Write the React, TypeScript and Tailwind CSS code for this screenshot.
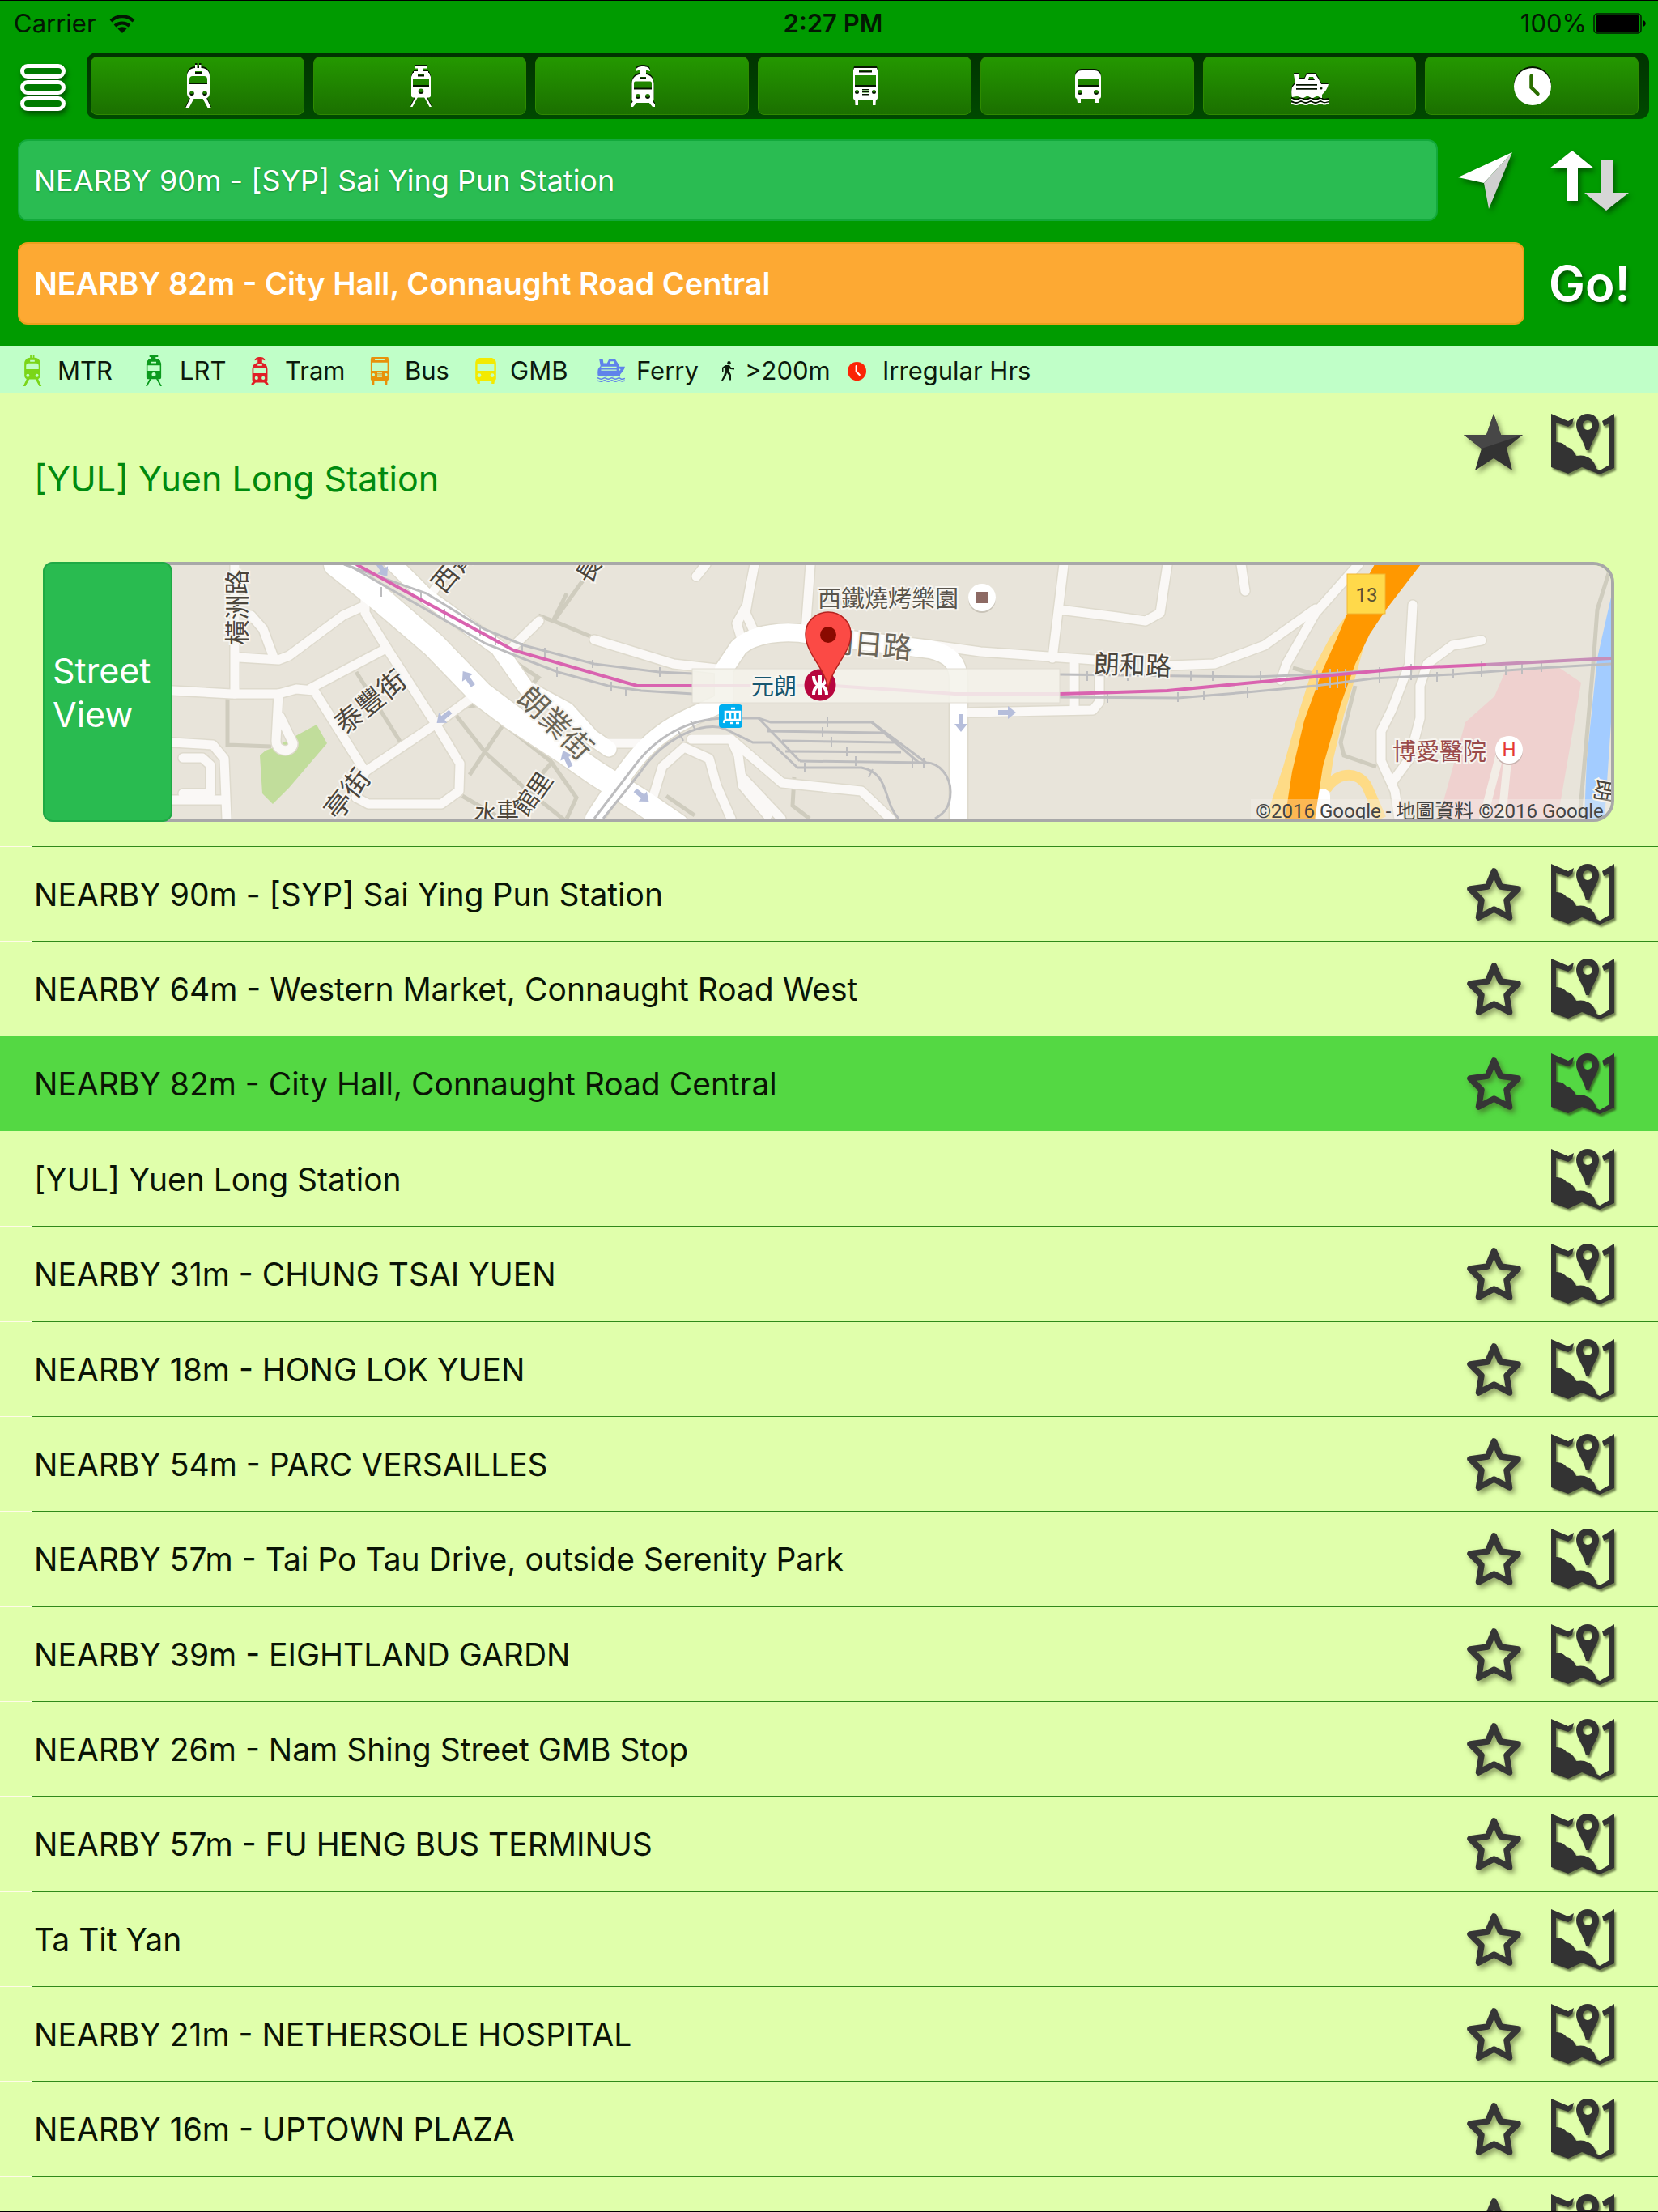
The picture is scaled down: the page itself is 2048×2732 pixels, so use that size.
import type { ReactNode } from 'react';

interface Stop {
  name: string;
  starred?: boolean;
  selected?: boolean;
}

const stops: Stop[] = [
  { name: 'NEARBY 90m - [SYP] Sai Ying Pun Station', starred: true },
  { name: 'NEARBY 64m - Western Market, Connaught Road West', starred: true },
  { name: 'NEARBY 82m - City Hall, Connaught Road Central', starred: true, selected: true },
  { name: '[YUL] Yuen Long Station' },
  { name: 'NEARBY 31m - CHUNG TSAI YUEN', starred: true },
  { name: 'NEARBY 18m - HONG LOK YUEN', starred: true },
  { name: 'NEARBY 54m - PARC VERSAILLES', starred: true },
  { name: 'NEARBY 57m - Tai Po Tau Drive, outside Serenity Park', starred: true },
  { name: 'NEARBY 39m - EIGHTLAND GARDN', starred: true },
  { name: 'NEARBY 26m - Nam Shing Street GMB Stop', starred: true },
  { name: 'NEARBY 57m - FU HENG BUS TERMINUS', starred: true },
  { name: 'Ta Tit Yan', starred: true },
  { name: 'NEARBY 21m - NETHERSOLE HOSPITAL', starred: true },
  { name: 'NEARBY 16m - UPTOWN PLAZA', starred: true },
  { name: '', starred: true },
];

/* ---------- transport icons ---------- */

interface IconProps {
  className?: string;
}

function MtrIcon({ className }: IconProps) {
  return (
    <svg viewBox="0 0 32 54" className={className} fill="currentColor" aria-hidden="true">
      <path d="M12 0h2.500v5H12zM17 0h2.500v5H17z" />
      <path
        fillRule="evenodd"
        d="M12 4h8c5 0 10 4 10 10v21c0 4-3 7-7 7H9c-4 0-7-3-7-7V14C2 8 7 4 12 4zm0 4v3h8V8zM9 14c-2.500 0-4 1.500-4 4v6h22v-6c0-2.500-1.500-4-4-4zM8 32.500a2.800 2.800 0 1 0 0 5.600 2.800 2.800 0 0 0 0-5.600zm16 0a2.800 2.800 0 1 0 0 5.600 2.800 2.800 0 0 0 0-5.600z"
      />
      <path d="M6 41h5L4 54H0zM21 41h5l6 13h-4z" />
    </svg>
  );
}

function LrtIcon({ className }: IconProps) {
  return (
    <svg viewBox="0 0 26 50" className={className} fill="currentColor" aria-hidden="true">
      <path d="M6 0h14v2.500h-4V6h6v4H4V6h5V2.500H6z" />
      <path
        fillRule="evenodd"
        d="M3 8h20l2 5v23c0 1.500-1 2.500-2.500 2.500h-19C2 38.500 1 37.500 1 36V13zm6 2v2.500h8V10zm-6 6v9h20v-9zm10 11.500a3.300 3.300 0 1 0 0 6.600 3.300 3.300 0 0 0 0-6.600z"
      />
      <path d="M6 38h3L2.500 50H0zM17 38h3l6 12h-2.500z" />
    </svg>
  );
}

function TramIcon({ className }: IconProps) {
  return (
    <svg viewBox="0 0 30 50" className={className} fill="currentColor" aria-hidden="true">
      <path d="M6 6c0-4 4-6 9-6s9 2 9 6l-5-1.500V10h-8V4.500z" />
      <path
        fillRule="evenodd"
        d="M15 9.500c8 0 13.500 4 13.500 12V40c0 3-2 5-5 5h-17c-3 0-5-2-5-5V21.500c0-8 5.500-12 13.500-12zM11 13v2.500h8V13zM6 18.500c-1.500 0-2 1-2 2.500v7.500h22V21c0-1.500-.5-2.500-2-2.500zM9 34a3 3 0 1 0 0 6 3 3 0 0 0 0-6zm12 0a3 3 0 1 0 0 6 3 3 0 0 0 0-6z"
      />
      <path d="M3 43l5 1-5 6H0v-3zM27 43l-5 1 5 6h3v-3z" />
    </svg>
  );
}

function BusIcon({ className }: IconProps) {
  return (
    <svg viewBox="0 0 30 46" className={className} fill="currentColor" aria-hidden="true">
      <path
        fillRule="evenodd"
        d="M1 0h28l1 3v34c0 1.500-1 2.500-2.500 2.500h-25C1 39.500 0 38.500 0 37V3zm6 3v2.500h16V3zM2 9v14h26V9zm2.500 18a2.500 2.500 0 1 0 0 5 2.500 2.500 0 0 0 0-5zm21 0a2.500 2.500 0 1 0 0 5 2.500 2.500 0 0 0 0-5zM11 26v1.500h8V26zm0 3v1.500h8V29zm0 3v1.500h8V32z"
      />
      <path d="M2 38h4v8H2.500zM24 38h4l-.5 8H24z" />
    </svg>
  );
}

function MinibusIcon({ className }: IconProps) {
  return (
    <svg viewBox="0 0 32 40" className={className} fill="currentColor" aria-hidden="true">
      <path
        fillRule="evenodd"
        d="M8 0h16c4 0 8 3 8 8v24c0 2-1 3-3 3H3c-2 0-3-1-3-3V8c0-5 4-8 8-8zM3 10v10h26V10zm3 14a3 3 0 1 0 0 6 3 3 0 0 0 0-6zm20 0a3 3 0 1 0 0 6 3 3 0 0 0 0-6z"
      />
      <path d="M2 34h5v6H3zM25 34h5l-1 6h-4z" />
    </svg>
  );
}

function FerryIcon({ className }: IconProps) {
  return (
    <svg viewBox="0 0 46 38" className={className} fill="currentColor" aria-hidden="true">
      <path
        fillRule="evenodd"
        d="M3 0h6l1 6h6l3-6h11l4 6 3 6h9c-1 5-4 9-8 13v4c-3 0-3-2-6-2s-3 2-6 2-3-2-6-2-3 2-6 2-4-2-7-2-4 1-6 1c-1-4-1-8 0-12l4-5zm19 3l-1 4h8l-2-4zM6 12v1.800h26V12zm0 5v1.800h26V17zm31-1.500a1.500 1.500 0 1 0 0 3 1.500 1.500 0 0 0 0-3z"
      />
      <path
        d="M0 31c2 0 3 2 6 2s4-2 6-2 3 2 6 2 4-2 6-2 3 2 6 2 4-2 6-2 3 2 5 2 3-1 5-1M0 35.500c2 0 3 1.500 6 1.500s4-2 6-2 3 2 6 2 4-2 6-2 3 2 6 2 4-2 6-2 3 1.500 5 1.500 3-1 5-1"
        fill="none"
        stroke="currentColor"
        strokeWidth="2"
      />
    </svg>
  );
}

function ClockIcon({ className, hands = '#2a6e00' }: IconProps & { hands?: string }) {
  return (
    <svg viewBox="0 0 46 46" className={className} aria-hidden="true">
      <circle cx="23" cy="23" r="23" fill="currentColor" />
      <path d="M21.500 10v14l8 8" fill="none" stroke={hands} strokeWidth="4.500" strokeLinecap="round" />
    </svg>
  );
}

function WalkIcon({ className }: IconProps) {
  return (
    <svg viewBox="0 0 16 24" className={className} fill="currentColor" aria-hidden="true">
      <circle cx="9.500" cy="2.200" r="2.200" />
      <path d="M5 5h5l2 3 4 1v1.500l-5-.5-1-1v4l2 4v6.500H9.500V18L7 14.500 5.500 19 2 24H0l3-6 1.500-5V8L2.500 9v4H1V8z" />
    </svg>
  );
}

/* ---------- action icons ---------- */

function MapPinIcon() {
  return (
    <svg viewBox="0 0 78 75" className="h-[75px] w-[78px] drop-shadow-[2px_3px_1px_rgba(40,50,20,0.6)]" fill="#333333" aria-hidden="true">
      <path d="M0 0l21 9 7-4-2 8-5 3-15-5v24c6 0 10 2 13 6 6 1 9 5 12 11 5-1 10-1 15 2 6 3 8 8 10 14l4 2 12-7V12l-7 3-2-6L78 0v67l-18 8-22-9-17 8-21-8z" />
      <path
        fillRule="evenodd"
        d="M45 0c8 0 14 6 14 14 0 9-8 18-12 31h-4C40 32 31 23 31 14 31 6 37 0 45 0zm0 8a6 6 0 1 0 0 12 6 6 0 0 0 0-12z"
      />
    </svg>
  );
}

function StarOutlineIcon() {
  return (
    <svg viewBox="0 0 67 65" className="h-[65px] w-[67px] drop-shadow-[3px_4px_3px_rgba(60,70,30,0.55)]" aria-hidden="true">
      <path
        d="M33.500 4l8 19L63 26 49 40l3.500 21-19-10-19 10L18 40 4 26l21.500-3z"
        fill="none"
        stroke="#363636"
        strokeWidth="7.500"
        strokeLinejoin="round"
      />
    </svg>
  );
}

function StarFilledIcon() {
  return (
    <svg viewBox="0 0 73 70" className="h-[70px] w-[73px] drop-shadow-[3px_4px_3px_rgba(60,70,30,0.55)]" aria-hidden="true">
      <path d="M37 0l9 26h27L53 42l7 28-23-15-23 15 8-27L0 26h28z" fill="#333333" />
      <path d="M37 0l9 26h27L22 43 0 26h28z" fill="#474747" />
    </svg>
  );
}

function LocateIcon() {
  return (
    <svg viewBox="0 0 68 70" className="h-[70px] w-[68px] drop-shadow-[3px_4px_3px_rgba(0,50,0,0.6)]" aria-hidden="true">
      <path d="M67 0L0 31l32 7z" fill="#ffffff" />
      <path d="M67 0L32 38l6 32z" fill="#cfcfcf" />
    </svg>
  );
}

function SwapIcon() {
  return (
    <svg viewBox="0 0 98 74" className="h-[74px] w-[98px] drop-shadow-[3px_4px_3px_rgba(0,50,0,0.6)]" aria-hidden="true">
      <path d="M28 0l27 22H35v40H21V22H0z" fill="#ffffff" />
      <path d="M64 12h14v40h20L70 74 43 52h21z" fill="#d6d6d6" />
    </svg>
  );
}

function MenuIcon() {
  return (
    <svg viewBox="0 0 56 58" className="h-[58px] w-14 drop-shadow-[2px_4px_3px_rgba(0,50,0,0.7)]" aria-hidden="true">
      <g fill="#007a00" stroke="#ffffff" strokeWidth="5">
        <rect x="2.500" y="2.500" width="51" height="13" rx="6.500" />
        <rect x="2.500" y="22.500" width="51" height="13" rx="6.500" />
        <rect x="2.500" y="42.500" width="51" height="13" rx="6.500" />
      </g>
    </svg>
  );
}

/* ---------- station map ---------- */

const localRoads = [
  'M290 697V857',
  'M295 812L344 815 357 810 424 760 446 750',
  'M451 737V757L482 807 540 897 568 943 567 977 545 993H455L440 985',
  'M384 850L473 803',
  'M213 853L286 857H344L366 851 388 853 451 953',
  'M589 857L540 893 451 953 440 985',
  'M344 857L341 915C341 930 362 930 362 918L346 885',
  'M213 917L263 920 277 937 280 1011',
  'M213 988H277',
  'M226 936H250L260 945V980H226',
  'M310 760L325 777 338 812',
  'M666 767L627 805',
  'M558 697L532 735',
  'M872 697L860 712',
  'M932 697L925 733 921 757 930 777 943 787',
  'M921 750L910 770 917 793',
  'M1001 697L995 780',
  'M734 790L832 820 894 827',
  'M751 918H795',
  'M1153 797L1211 805 1380 817',
  'M1446 822L1500 820 1562 797 1625 752',
  'M1678 697L1625 757 1589 820 1582 840',
  'M1314 697L1300 813',
  'M1309 753L1380 762 1415 767 1433 757 1442 697',
  'M1533 697L1538 730',
  'M1198 880L1350 877 1358 867V830',
  'M1327 877V820',
  'M805 990L818 947 845 923 876 937 885 970 903 1011',
  'M854 913H903L912 933 917 970 948 1007',
  'M903 913L966 967 1064 977 1100 1011',
  'M917 960L965 1011',
  'M1745 747L1741 820 1719 877 1706 903V940L1723 977 1728 1011',
  'M1830 791L1794 797 1763 820 1754 847V887L1741 937 1719 967',
];

const footpaths = [
  'M281 863V920L335 922',
  'M440 830L495 917',
  'M700 733L683 767 665 760',
  'M629 813L665 837 652 850',
  'M563 883L600 930 650 975 700 1015',
  'M575 873L594 870 625 897 680 940 712 985 700 1011',
  'M625 890L598 930 580 957',
  'M571 983L612 1007',
  'M683 940L634 997',
  'M725 710L684 767 734 788',
  'M981 960L979 995 1000 1011',
  'M823 983L858 1007',
  'M1674 847L1656 917 1660 933 1700 947',
  'M1597 825L1625 833',
  'M1988 705L1973 753 1968 820 1951 1011',
];

const rails = [
  'M425 697L527 733 598 777 647 797 734 820 814 830 856 832',
  'M434 700L600 795 650 815 689 830 751 847 792 853 856 857',
  'M1309 833L1549 836 1625 833 1741 825',
  'M1309 861L1455 862 1540 855 1625 847 1696 838 1794 833 1902 825 1991 820',
  'M734 1011L783 947C810 910 850 888 894 887H937L952 892H1077L1144 942C1160 942 1174 958 1174 978S1165 1005 1155 1011',
  'M745 1011L790 955C820 910 870 890 895 900L930 917H952L985 948H1064C1100 955 1090 990 1110 1011',
  'M948 903L1091 905',
  'M966 915L1109 917',
  'M970 928L1113 929',
  'M988 940L1144 942',
  'M937 887L988 940',
  'M1077 892L1135 942',
];

const railTicks =
  'M471 725v12M520 730v14M549 752v16M593 772v14M612 783v14M645 794v14M673 800v14M688 824v12M732 815v10M755 842v12M815 824v12M773 848v12M1022 886v12M1016 898v12M1027 910v12M1046 922v12M1057 934v12M994 942v12M1127 936v12M1141 936v12M1078 950l-5 10M853 890l6 12M838 903l6 12M1393 829v12M1471 829v12M1498 829v12M1557 829v12M1343 829v12M1368 856v12M1455 855v12M1487 853v12M1541 848v14M1627 828v24M1643 826v24M1652 826v24M1662 826v24M1704 824v20M1743 820v20M1775 830v12M1795 826v12M1830 816v20M1860 822v12M1880 820v12M1904 818v12';

const stationLoop =
  'M894 827L912 800C930 782 970 778 1001 784L1149 802C1175 808 1184 820 1184 840V1011M894 827V867L850 887C800 910 780 940 734 1011';
const mainStreet = 'M415 697L473 743 536 797 594 857 634 887 700 930 736 955 792 990 836 1020';
const sideStreet = 'M480 690L527 737 615 800 650 850 700 877 730 910 752 925';

const arrows: [number, number, number][] = [
  [578, 838, -125],
  [548, 886, 140],
  [472, 703, 55],
  [700, 937, -115],
  [793, 983, 40],
  [1187, 893, 90],
  [1244, 880, 0],
];

interface MapLabel {
  text: string;
  x: number;
  y: number;
  size: number;
  angle?: number;
  color?: string;
}

const labels: MapLabel[] = [
  { text: '橫洲路', x: 290, y: 750, size: 31, angle: -90 },
  { text: '泰豐街', x: 456, y: 865, size: 34, angle: -39 },
  { text: '亭街', x: 427, y: 979, size: 34, angle: -52 },
  { text: '西菁', x: 558, y: 701, size: 32, angle: -50 },
  { text: '水', x: 600, y: 1002, size: 28, angle: 5 },
  { text: '車', x: 627, y: 1000, size: 28 },
  { text: '館', x: 648, y: 990, size: 30, angle: -55 },
  { text: '里', x: 665, y: 968, size: 30, angle: -55 },
  { text: '朗業街', x: 688, y: 891, size: 37, angle: 44, color: '#6a6455' },
  { text: '長', x: 725, y: 703, size: 30, angle: -60 },
  { text: '西鐵燒烤樂園', x: 1097, y: 737, size: 29, color: '#5a554d' },
  { text: '朗日路', x: 1073, y: 793, size: 36, angle: 5, color: '#6b665a' },
  { text: '元朗', x: 956, y: 846, size: 28, color: '#17566f' },
  { text: '朗和路', x: 1399, y: 819, size: 32, angle: 2 },
  { text: '博愛醫院', x: 1778, y: 926, size: 29, color: '#9a4b4b' },
  { text: '朗', x: 1984, y: 977, size: 28, angle: 100 },
];

function StationMap() {
  return (
    <svg
      viewBox="57 698 1933 313"
      preserveAspectRatio="xMidYMid slice"
      className="block h-full w-full"
      role="img"
      aria-label="Map of Yuen Long Station"
    >
      <rect x="0" y="600" width="2100" height="500" fill="#e8e4da" />
      <path d="M328 927L339 923 391 895 404 918 357 973 337 993 324 980 321 933z" fill="#c1dd9b" />
      <path d="M1859 830L1922 822 1953 843 1924 1011H1777L1810 892 1846 860z" fill="#efd1cf" />
      <path d="M1991 733L1973 813 1960 937 1957 1011H1982L1991 877z" fill="#a3ccff" />

      <g fill="none" stroke="#cfccbe" strokeWidth="5">
        {footpaths.map((d) => (
          <path key={d} d={d} />
        ))}
      </g>

      <g fill="none" strokeLinecap="round" strokeLinejoin="round">
        <g stroke="#dedacd">
          <g strokeWidth="14">
            {localRoads.map((d) => (
              <path key={d} d={d} />
            ))}
          </g>
          <path d={stationLoop} strokeWidth="25" />
          <path d={mainStreet} strokeWidth="33" />
          <path d={sideStreet} strokeWidth="22" />
        </g>
        <g stroke="#faf8f6" strokeWidth="11">
          {localRoads.map((d) => (
            <path key={d} d={d} />
          ))}
        </g>
        <g stroke="#ffffff">
          <path d={stationLoop} strokeWidth="22" />
          <path d={mainStreet} strokeWidth="30" />
          <path d={sideStreet} strokeWidth="19" />
        </g>
        <path d="M1857 915L1832 1011M1862 940L1855 1011" stroke="#f2ede6" strokeWidth="10" />
      </g>

      {/* route 13 */}
      <path d="M1663 760L1643 787 1620 830 1602 887 1585 947 1563 1012H1640V983L1647 937 1660 883 1676 830 1685 797z" fill="#fedb86" />
      <path d="M1638 975C1650 955 1675 950 1688 970L1706 1011" fill="none" stroke="#fedb86" strokeWidth="13" />
      <path d="M1634 983V1011" stroke="#ffffff" strokeWidth="18" strokeLinecap="round" />
      <path
        d="M1698 697L1663 760 1652 787 1634 827 1611 890 1596 953 1587 1012H1624L1634 947 1656 870 1674 820 1692 783 1712 753 1755 697z"
        fill="#ff9800"
      />

      <g fill="none" stroke="#bdbdbf" strokeWidth="3">
        {rails.map((d) => (
          <path key={d} d={d} />
        ))}
        <path d={railTicks} strokeWidth="2" />
      </g>
      <path
        d="M440 697L634 803 787 847H1030L1180 857H1309L1348 856 1442 853 1634 835 1741 825 1835 821"
        fill="none"
        stroke="#d963b0"
        strokeWidth="4"
      />
      <path d="M1835 821L1991 813" fill="none" stroke="#c78fb8" strokeWidth="4" />
      <rect x="855" y="826" width="454" height="42" fill="#f4f2ea" fillOpacity="0.88" stroke="#e0dcd2" strokeWidth="1" />

      {arrows.map(([x, y, angle]) => (
        <path
          key={`${x}-${y}`}
          d="M-11-3H1v-5L11 0 1 8V3h-12z"
          transform={`translate(${x} ${y}) rotate(${angle})`}
          fill="#b6bedb"
        />
      ))}

      {labels.map(({ text, x, y, size, angle = 0, color = '#4b453b' }) => (
        <text
          key={`${text}-${x}`}
          transform={`translate(${x} ${y}) rotate(${angle})`}
          fontSize={size}
          fill={color}
          stroke="#f7f5f0"
          strokeWidth="4"
          paintOrder="stroke"
          textAnchor="middle"
          dominantBaseline="central"
          className="font-['Noto_Sans_CJK_TC',sans-serif]"
        >
          {text}
        </text>
      ))}

      <circle cx="1213" cy="740" r="17" fill="#c9c4b9" />
      <circle cx="1213" cy="738" r="17" fill="#ffffff" />
      <rect x="1206" y="731" width="14" height="14" fill="#8d6a64" />

      <circle cx="1864" cy="928" r="17" fill="#c9b4b0" />
      <circle cx="1864" cy="926" r="17" fill="#ffffff" />
      <text x="1864" y="934" fontSize="24" fill="#e53935" textAnchor="middle" className="font-['Roboto',sans-serif]">
        H
      </text>

      <rect x="1664" y="709" width="47" height="49" fill="#ffd94a" stroke="#f2b632" strokeWidth="1" />
      <text x="1688" y="743" fontSize="24" fill="#5c5334" textAnchor="middle" className="font-['Roboto',sans-serif]">
        13
      </text>

      {/* light rail stop */}
      <rect x="888" y="870" width="29" height="29" rx="4" fill="#00aeef" />
      <path d="M896 879h18v10h-18zM902 879v10M908 879v10M903 875h5M902 893h4M909 893h4M895 889l-1 4" fill="none" stroke="#ffffff" strokeWidth="2.500" />

      {/* station roundel */}
      <circle cx="1013" cy="846" r="19.500" fill="#b7053f" />
      <path d="M1013 834v24M1005 835c0 15 16 15 16 0M1005 858c0-15 16-15 16 0" fill="none" stroke="#ffffff" strokeWidth="4" />

      <path
        d="M1023 852C1020 825 995 808 995 783a28 27 0 0 1 56 0C1051 808 1026 825 1023 852z"
        fill="#fb4a45"
        stroke="#b5231f"
        strokeWidth="1.500"
      />
      <circle cx="1023" cy="784" r="10" fill="#8a0a00" />

      <rect x="1545" y="987" width="450" height="30" fill="#f5f3ee" fillOpacity="0.35" />
      <text x="1766" y="1010" fontSize="24" fill="#444444" textAnchor="middle" className="font-['Roboto','Noto_Sans_CJK_TC',sans-serif]">
        ©2016 Google - 地圖資料 ©2016 Google
      </text>
    </svg>
  );
}

/* ---------- page parts ---------- */

const tabs: { label: string; icon: ReactNode }[] = [
  { label: 'MTR', icon: <MtrIcon className="h-[54px] w-8" /> },
  { label: 'Light rail', icon: <LrtIcon className="h-[50px] w-[26px]" /> },
  { label: 'Tram', icon: <TramIcon className="h-[50px] w-[30px]" /> },
  { label: 'Bus', icon: <BusIcon className="h-[46px] w-[30px]" /> },
  { label: 'Minibus', icon: <MinibusIcon className="h-10 w-8" /> },
  { label: 'Ferry', icon: <FerryIcon className="mt-2 h-[38px] w-[46px]" /> },
  { label: 'Recent', icon: <ClockIcon className="size-[46px]" /> },
];

function StatusBar() {
  return (
    <div className="grid h-[65px] grid-cols-[1fr_auto_1fr] items-center border-t border-black pb-2 pl-[17px] pr-[15px] text-[31px] text-[#031803]">
      <div className="flex items-center gap-4">
        <span>Carrier</span>
        <svg viewBox="0 0 32 24" className="h-6 w-8" aria-hidden="true">
          <path d="M2 9a20 20 0 0 1 28 0M7 15a13 13 0 0 1 18 0" fill="none" stroke="currentColor" strokeWidth="4" />
          <path d="M10.500 18.500a8 8 0 0 1 11 0L16 24z" fill="currentColor" />
        </svg>
      </div>
      <time className="pl-2 font-semibold">2:27 PM</time>
      <div className="flex items-center justify-end gap-2">
        <span>100%</span>
        <svg viewBox="0 0 65 26" className="h-[26px] w-[65px]" aria-hidden="true">
          <rect x="1" y="1" width="58" height="24" rx="4" fill="none" stroke="currentColor" strokeWidth="1.500" />
          <rect x="3" y="3" width="54" height="20" rx="2" fill="#000000" />
          <path d="M61 9c5 1 5 7 0 8z" fill="#000000" />
        </svg>
      </div>
    </div>
  );
}

function ModeTabs() {
  return (
    <nav className="flex h-[82px] items-stretch gap-[26px] pl-[25px] pr-[11px]">
      <button type="button" aria-label="Menu" className="flex items-center pt-1">
        <MenuIcon />
      </button>
      <div className="flex flex-1 gap-[11px] rounded-xl bg-linear-to-b from-[#003300] to-[#004a00] py-[5px] pl-[5px] pr-[13px]">
        {tabs.map(({ label, icon }) => (
          <button
            key={label}
            type="button"
            aria-label={label}
            className="flex flex-1 items-center justify-center rounded-lg border border-[#2f8a00] bg-linear-to-b from-[#249800] to-[#1b7000] pl-0.5 pt-0.5 text-white [&>svg]:drop-shadow-[0_-2px_0_rgba(0,0,0,0.85)]"
          >
            {icon}
          </button>
        ))}
      </div>
    </nav>
  );
}

function SearchForm() {
  return (
    <form className="flex flex-col gap-[26px] pb-[26px] pt-[25px]">
      <div className="flex items-center pl-[22px] pr-9">
        <input
          aria-label="From"
          defaultValue="NEARBY 90m - [SYP] Sai Ying Pun Station"
          className="h-[101px] min-w-0 flex-1 rounded-xl border-2 border-[#13a93c] bg-[#2abc52] px-[18px] text-[36px] text-white text-shadow-[0_1px_2px_rgba(0,80,0,0.4)]"
        />
        <button type="button" aria-label="Use current location" className="ml-[25px]">
          <LocateIcon />
        </button>
        <button type="button" aria-label="Swap" className="ml-[45px]">
          <SwapIcon />
        </button>
      </div>
      <div className="flex items-center gap-[30px] pl-[22px] pr-9">
        <input
          aria-label="To"
          defaultValue="NEARBY 82m - City Hall, Connaught Road Central"
          className="h-[102px] min-w-0 flex-1 rounded-xl border-2 border-[#ec9f1c] bg-[#fda933] px-[18px] text-[38px] font-semibold text-white"
        />
        <button type="submit" className="w-[99px] whitespace-nowrap text-[60px] font-semibold text-white text-shadow-[3px_4px_4px_rgba(0,50,0,0.6)]">
          Go!
        </button>
      </div>
    </form>
  );
}

const legend: { text: string; icon: ReactNode; box: string }[] = [
  { text: 'MTR', box: 'w-[43px]', icon: <MtrIcon className="h-[38px] w-6 text-[#7bd618]" /> },
  { text: 'LRT', box: 'w-[43px]', icon: <LrtIcon className="h-[38px] w-[22px] text-[#0c9a1e]" /> },
  { text: 'Tram', box: 'w-[43px]', icon: <TramIcon className="h-[35px] w-6 text-[#e01f26]" /> },
  { text: 'Bus', box: 'w-[43px]', icon: <BusIcon className="h-[34px] w-6 text-[#e8920a]" /> },
  { text: 'GMB', box: 'w-[43px]', icon: <MinibusIcon className="h-[32px] w-[26px] text-[#f3ea00]" /> },
  { text: 'Ferry', box: 'w-[48px]', icon: <FerryIcon className="h-[28px] w-[34px] text-[#5f83ea]" /> },
  { text: '>200m', box: 'w-[29px]', icon: <WalkIcon className="h-6 w-4" /> },
  { text: 'Irregular Hrs', box: 'w-[43px]', icon: <ClockIcon hands="#ffffff" className="size-[23px] text-[#fb2405]" /> },
];

function Legend() {
  return (
    <ul className="grid h-[59px] shrink-0 grid-cols-[151px_130px_148px_130px_151px_153px_156px_auto] items-center justify-start bg-[#c0ffc8] pl-7 pt-[3px] text-[31px] text-[#0c1a0c]">
      {legend.map(({ text, icon, box }) => (
        <li key={text} className="flex items-center">
          <span className={`flex shrink-0 ${box}`}>{icon}</span>
          <span className="whitespace-nowrap">{text}</span>
        </li>
      ))}
    </ul>
  );
}

function StationCard() {
  return (
    <section className="flex h-[559px] shrink-0 flex-col pl-[42px] pr-[54px]">
      <div className="flex h-[208px] justify-between">
        <h1 className="pt-[78px] text-[43px] leading-[54px] text-[#008a0e]">[YUL] Yuen Long Station</h1>
        <div className="flex gap-[35px] pt-[25px]">
          <button type="button" aria-label="Remove from favourites" className="self-start">
            <StarFilledIcon />
          </button>
          <button type="button" aria-label="Show on map" className="self-start">
            <MapPinIcon />
          </button>
        </div>
      </div>
      <div className="relative ml-[11px] h-[321px]">
        <div className="h-full overflow-hidden rounded-r-[26px] rounded-l-xl border-4 border-[#a8a8a8]">
          <StationMap />
        </div>
        <button
          type="button"
          className="absolute left-0 top-0 h-full w-40 rounded-xl border-2 border-[#1faa44] bg-[#29bb50] pl-2.5 text-left text-[43px] leading-[54px] text-white"
        >
          Street
          <br />
          View
        </button>
      </div>
    </section>
  );
}

function StopRow({ name, starred, selected }: Stop) {
  return (
    <li
      className={
        selected
          ? 'group flex h-[118px] border-[#54d843] bg-[#54d843]'
          : 'group flex h-[117px] nth-[3n]:h-[118px]'
      }
    >
      <span
        className={
          selected
            ? 'w-10'
            : 'w-10 border-t border-[#fffbe8] group-nth-[3n]:border-t-2 group-nth-[4]:border-transparent'
        }
      />
      <div
        className={
          selected
            ? 'flex flex-1 items-center pl-0.5 pr-[54px]'
            : 'flex flex-1 items-center border-t border-[#2f8a1a] pl-0.5 pr-[54px] group-nth-[3n]:border-t-2 group-nth-[4]:border-transparent'
        }
      >
        <span className="flex-1 pt-[3px] text-[39px] text-[#0a1405]">{name}</span>
        {starred && (
          <button type="button" aria-label="Add to favourites" className="mr-[37px]">
            <StarOutlineIcon />
          </button>
        )}
        <button type="button" aria-label="Show on map">
          <MapPinIcon />
        </button>
      </div>
    </li>
  );
}

export default function App() {
  return (
    <div className="flex h-screen flex-col overflow-hidden border-b border-black bg-[#e0ffab] font-['Inter','Noto_Sans_CJK_TC',sans-serif]">
      <header className="shrink-0 bg-[#009b00]">
        <StatusBar />
        <ModeTabs />
        <SearchForm />
      </header>
      <Legend />
      <StationCard />
      <ul>
        {stops.map((stop, i) => (
          <StopRow key={i} {...stop} />
        ))}
      </ul>
    </div>
  );
}
